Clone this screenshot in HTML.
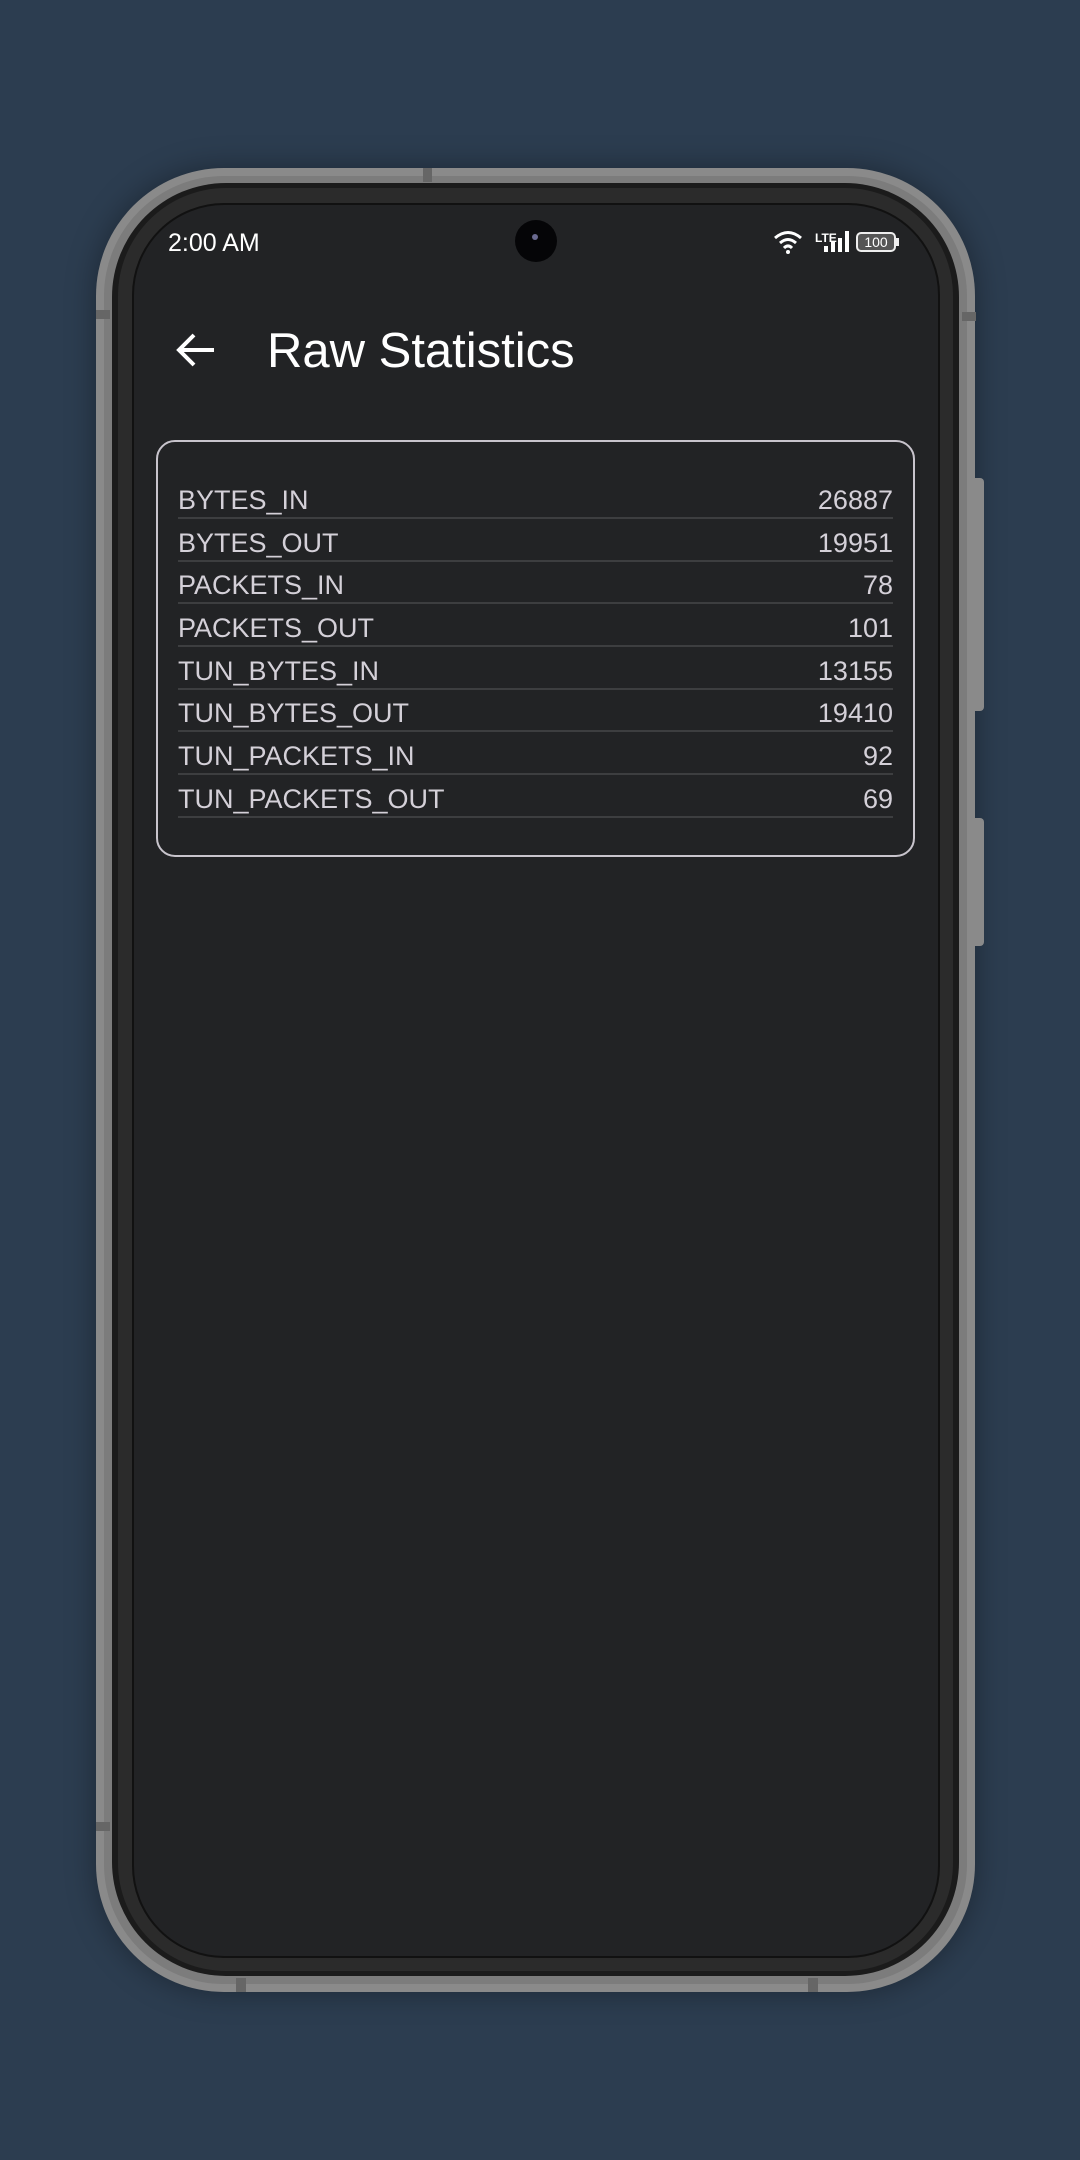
<!DOCTYPE html>
<html><head><meta charset="utf-8"><style>
*{margin:0;padding:0;box-sizing:border-box}
body{width:1080px;height:2160px;background:#2c3d50;position:relative;overflow:hidden;font-family:"Liberation Sans",sans-serif}
.abs{position:absolute}
.frame{left:96px;top:168px;width:879px;height:1824px;border-radius:128px;background:#8a8a8a;box-shadow:0 0 30px rgba(0,0,0,.35)}
.rim{left:104px;top:176px;width:863px;height:1808px;border-radius:120px;background:#7c7c7c}
.bezel{left:112px;top:183px;width:847px;height:1793px;border-radius:114px;background:#1b1b1b}
.bezel2{left:118px;top:188px;width:835px;height:1783px;border-radius:108px;background:#2b2b2b}
.screen{left:132px;top:203px;width:808px;height:1755px;border-radius:92px;background:#222325;border:2px solid #111}
.btn{background:#8a8a8a;border-radius:0 4px 4px 0}
.txt{color:#fff}
.row{position:absolute;left:178px;width:715px;height:42.7px;border-bottom:2px solid #3d3e40;color:#d4d0d8;font-size:27px}
.row span{position:absolute;bottom:1px}
.row .v{right:0}
</style></head><body>
<div class="abs frame"></div>
<div class="abs rim"></div>
<div class="abs" style="left:423px;top:168px;width:9px;height:14px;background:#666"></div>
<div class="abs" style="left:236px;top:1978px;width:10px;height:14px;background:#666"></div>
<div class="abs" style="left:808px;top:1978px;width:10px;height:14px;background:#666"></div>
<div class="abs" style="left:96px;top:310px;width:14px;height:9px;background:#666"></div>
<div class="abs" style="left:962px;top:312px;width:14px;height:9px;background:#666"></div>
<div class="abs" style="left:96px;top:1822px;width:14px;height:9px;background:#666"></div>
<div class="abs btn" style="left:974px;top:478px;width:10px;height:233px"></div>
<div class="abs btn" style="left:974px;top:818px;width:10px;height:128px"></div>
<div class="abs bezel"></div>
<div class="abs bezel2"></div>
<div class="abs screen"></div>
<div class="abs" style="left:515px;top:220px;width:42px;height:42px;border-radius:50%;background:#050507"></div>
<div class="abs" style="left:532px;top:234px;width:6px;height:6px;border-radius:50%;background:#6a6a90"></div>
<div class="abs txt" style="left:168px;top:229px;font-size:25px">2:00 AM</div>
<svg class="abs" style="left:772px;top:228px" width="130" height="28" viewBox="0 0 130 28">
<path d="M3 10 Q16 -1 29 10" stroke="#fff" stroke-width="3" fill="none"/>
<path d="M8 15 Q16 8 24 15" stroke="#fff" stroke-width="3" fill="none"/>
<path d="M12 20 Q16 16 20 20" stroke="#fff" stroke-width="3" fill="none"/>
<circle cx="16" cy="24" r="2" fill="#fff"/>
<text x="43" y="14" fill="#fff" font-size="12" font-family="Liberation Sans" font-weight="bold">LTE</text>
<rect x="52" y="18" width="4" height="6" fill="#fff"/><rect x="59" y="14" width="4" height="10" fill="#fff"/><rect x="66" y="10" width="4" height="14" fill="#fff"/><rect x="73" y="3" width="4" height="21" fill="#fff"/>
<rect x="85" y="5" width="38" height="18" rx="4" fill="#555" stroke="#eee" stroke-width="2"/>
<rect x="124" y="10" width="3" height="8" fill="#eee"/>
<text x="104" y="19" fill="#fff" font-size="14" text-anchor="middle" font-family="Liberation Sans">100</text>
</svg>
<svg class="abs" style="left:174px;top:330px" width="44" height="40" viewBox="0 0 44 40">
<path d="M40 20 H6 M20 5 L5 20 L20 35" stroke="#fff" stroke-width="4" fill="none"/>
</svg>
<div class="abs txt" style="left:267px;top:323px;font-size:49px">Raw Statistics</div>
<div class="abs" style="left:156px;top:440px;width:759px;height:417px;border:2px solid #c8c4cc;border-radius:19px"></div>
<div class="row" style="top:476px"><span>BYTES_IN</span><span class="v">26887</span></div>
<div class="row" style="top:519px"><span>BYTES_OUT</span><span class="v">19951</span></div>
<div class="row" style="top:561px"><span>PACKETS_IN</span><span class="v">78</span></div>
<div class="row" style="top:604px"><span>PACKETS_OUT</span><span class="v">101</span></div>
<div class="row" style="top:647px"><span>TUN_BYTES_IN</span><span class="v">13155</span></div>
<div class="row" style="top:689px"><span>TUN_BYTES_OUT</span><span class="v">19410</span></div>
<div class="row" style="top:732px"><span>TUN_PACKETS_IN</span><span class="v">92</span></div>
<div class="row" style="top:775px"><span>TUN_PACKETS_OUT</span><span class="v">69</span></div>
</body></html>
